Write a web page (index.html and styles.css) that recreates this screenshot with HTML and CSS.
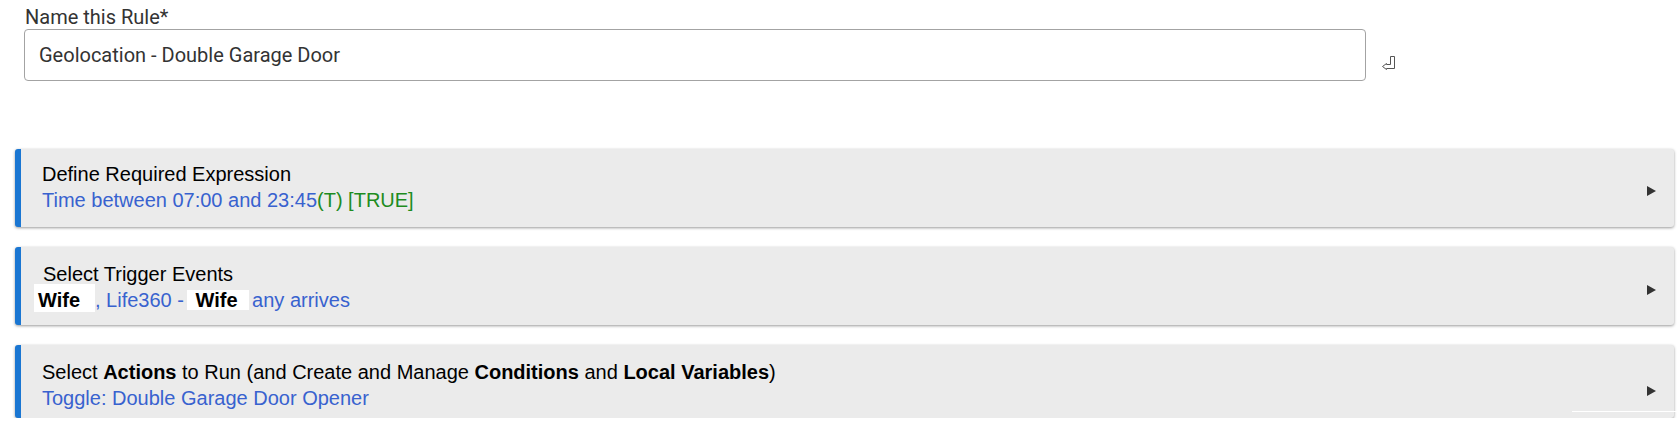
FILE: index.html
```html
<!DOCTYPE html>
<html>
<head>
<meta charset="utf-8">
<link rel="stylesheet" href="styles.css">
</head>
<body>
<div class="page">
  <div class="name-section">
    <label class="field-label">Name this Rule*</label>
    <div class="field-row">
      <div class="text-input">Geolocation - Double Garage Door</div>
      <svg class="enter-icon" width="14" height="14" viewBox="0 0 14 14">
        <path d="M8.5 0.5 H12.5 V12.5 H4.5 V13.5 L0.5 10.5 L4.5 7.5 V8.5 H8.5 Z" fill="none" stroke="#555" stroke-width="1"/>
      </svg>
    </div>
  </div>

  <div class="cards">
    <div class="card card-1">
      <div class="card-body">
        <div class="card-title">Define Required Expression</div>
        <div class="card-sub"><span class="blue">Time between 07:00 and 23:45</span><span class="green">(T) [TRUE]</span></div>
      </div>
      <span class="arrow"></span>
    </div>

    <div class="card card-2">
      <div class="card-body">
        <div class="card-title indent">Select Trigger Events</div>
        <div class="card-sub blue"><span class="redact redact-1"><b>Wife</b></span>, Life360 - <span class="redact redact-2"><b>Wife</b></span> any arrives</div>
      </div>
      <span class="arrow"></span>
    </div>

    <div class="card card-3">
      <div class="card-body">
        <div class="card-title">Select <b>Actions</b> to Run (and Create and Manage <b>Conditions</b> and <b>Local Variables</b>)</div>
        <div class="card-sub blue">Toggle: Double Garage Door Opener</div>
      </div>
      <span class="arrow"></span>
    </div>
  </div>
</div>
</body>
</html>
```

FILE: styles.css
```css
* { box-sizing: border-box; }
html, body { margin: 0; padding: 0; background: #fff; }

.page {
  width: 1679px;
}

.name-section {
  padding: 6px 0 0 24px;
  font-family: Roboto, "Liberation Sans", sans-serif;
  color: #333;
}

.field-label {
  display: block;
  font-size: 20px;
  line-height: 23px;
  padding-left: 1px;
  color: #333;
}

.field-row {
  display: flex;
  align-items: flex-start;
}

.text-input {
  width: 1342px;
  height: 52px;
  border: 1px solid #a3a3a3;
  border-radius: 4px;
  padding: 0 14px;
  display: flex;
  align-items: center;
  font-size: 20px;
  color: #333;
}

.enter-icon {
  margin: 27px 0 0 16px;
  display: block;
}

.cards {
  padding: 68px 5px 0 15px;
  display: flex;
  flex-direction: column;
  gap: 20px;
}

.card {
  position: relative;
  display: flex;
  align-items: flex-start;
  background: #ebebeb;
  border-left: 6px solid #1a76d2;
  border-radius: 3px;
  box-shadow: 0 1px 3px rgba(0, 0, 0, 0.4);
  padding: 12px 18px 14px 21px;
  font-family: "Liberation Sans", Arial, sans-serif;
  font-size: 20px;
  line-height: 26px;
  color: #000;
}

.card-2 { padding-top: 14px; padding-bottom: 12px; }
.card-3 { padding-top: 14px; padding-bottom: 7px; }

.card-3::after {
  content: "";
  position: absolute;
  right: -3px;
  bottom: 6px;
  width: 105px;
  height: 1px;
  background: #fff;
}

.card-body { flex: 1; }

.indent { padding-left: 1px; }

.card-title b { font-weight: bold; }

.blue { color: #3862cf; }
.green { color: #1e8c1e; }

.redact {
  display: inline-block;
  background: #fff;
  color: #000;
}

.redact b { font-weight: bold; }

.redact-1 {
  width: 61px;
  height: 28px;
  line-height: 24px;
  padding: 4px 0 0 4px;
  margin: -3px 0 0 -8px;
}

.redact-2 {
  width: 62px;
  height: 20px;
  line-height: 20px;
  padding-left: 9px;
  margin: 0 -2px 0 -3px;
}

.arrow {
  width: 0;
  height: 0;
  margin-top: 25px;
  border-left: 9px solid #333;
  border-top: 5px solid transparent;
  border-bottom: 5px solid transparent;
}

.card-2 .arrow { margin-top: 24px; }
.card-3 .arrow { margin-top: 27px; }
```
